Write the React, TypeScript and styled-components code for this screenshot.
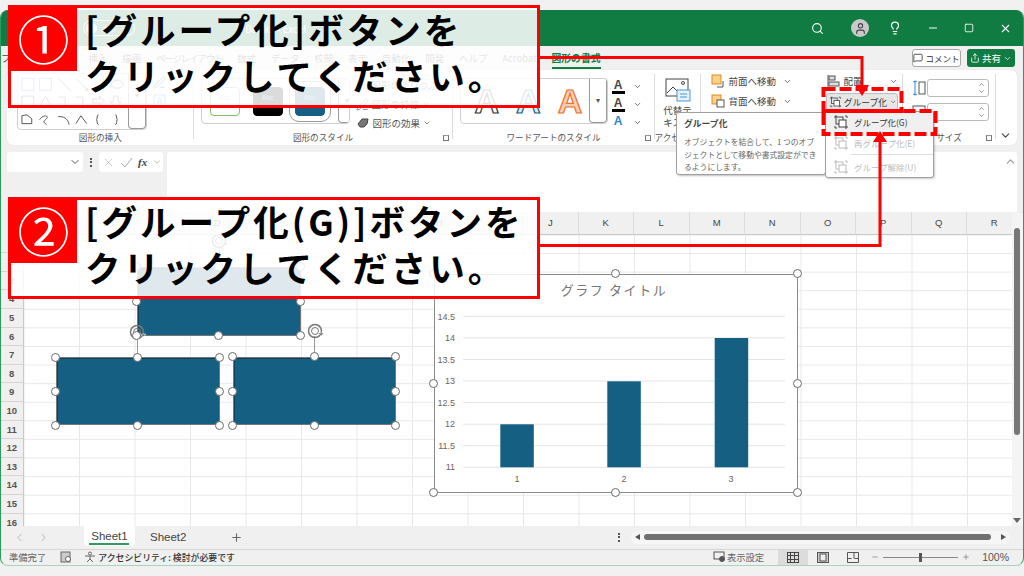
import styled, { createGlobalStyle } from "styled-components";
import {
  ChevronDown,
  ChevronLeft,
  ChevronRight,
  ChevronUp,
  Lightbulb,
  MessageSquare,
  Minus,
  PenLine,
  PaintBucket,
  Plus,
  Search,
  Share,
  Square,
  User,
  X,
} from "lucide-react";

const GREEN = "#107c41";
const RED = "#ff0000";
const BLUE = "#156082";
const JP = `"Noto Sans CJK JP", "Noto Sans", sans-serif`;

const GlobalStyle = createGlobalStyle`
  html, body { margin: 0; padding: 0; background: #f1f1f1; }
  * { box-sizing: border-box; }
  body { font-family: ${JP}; overflow: hidden; }
`;

const Page = styled.div`
  position: relative;
  width: 1024px;
  height: 576px;
  padding: 10px 0;
  overflow: hidden;
`;

const Window = styled.div`
  height: 556px;
  display: flex;
  flex-direction: column;
  background: #f0f0f0;
  border-radius: 8px;
  border-left: 1.5px solid #2f9a5e;
  border-right: 1.5px solid #2f9a5e;
  border-bottom: 1.5px solid #a9d3bc;
  overflow: hidden;
`;

/* title bar */
const TitleBar = styled.div`
  height: 36px;
  flex: none;
  background: ${GREEN};
  color: #fff;
  display: flex;
  align-items: center;
  padding-left: 82px;
  font-size: 10px;
`;

const AutoSave = styled.div`
  width: 52px;
  height: 16px;
  border: 1px solid #fff;
  border-radius: 8px;
  display: flex;
  align-items: center;
  gap: 4px;
  padding-left: 2px;
  font-size: 8px;
  &::before {
    content: "";
    width: 11px;
    height: 11px;
    border-radius: 50%;
    background: #fff;
  }
`;

const DocName = styled.div`
  margin-left: 110px;
`;

const TitleIcons = styled.div`
  margin-left: auto;
  display: flex;
  align-items: center;
`;

const TitleIcon = styled.div<{ $w: number }>`
  width: ${(p) => p.$w}px;
  display: flex;
  justify-content: center;
`;

const Avatar = styled.div`
  width: 18px;
  height: 18px;
  border-radius: 50%;
  background: #c9c9c9;
  color: #444;
  display: flex;
  align-items: center;
  justify-content: center;
`;

/* tab row */
const TabRow = styled.div`
  height: 24px;
  flex: none;
  display: flex;
  align-items: center;
  padding: 0 8px 0 0;
  gap: 14.8px;
  font-size: 9.5px;
  color: #444;
`;

const Tab = styled.div<{ $active?: boolean; $tight?: boolean }>`
  position: relative;
  line-height: 24px;
  white-space: nowrap;
  ${(p) => p.$tight && `letter-spacing: -1.2px;`}
  ${(p) =>
    p.$active &&
    `color: ${GREEN}; font-weight: 700; font-size: 9.8px;
     &::after { content: ""; position: absolute; left: 0; right: 0; bottom: 1px; height: 2px; background: ${GREEN}; }`}
`;

const TabActions = styled.div`
  margin-left: auto;
  display: flex;
  gap: 6px;
`;

const CommentButton = styled.div`
  width: 49px;
  height: 18px;
  border: 1px solid #a8a8a8;
  border-radius: 3px;
  background: #fff;
  display: flex;
  align-items: center;
  justify-content: center;
  gap: 2px;
  font-size: 8.5px;
  color: #333;
  white-space: nowrap;
`;

const ShareButton = styled(CommentButton)`
  width: 48px;
  border: none;
  background: ${GREEN};
  color: #fff;
  font-size: 9.5px;
`;

/* ribbon */
const Ribbon = styled.div`
  height: 75px;
  flex: none;
  margin: 0 6px;
  background: #fff;
  border-radius: 6px;
  display: flex;
  box-shadow: 0 0 1px rgba(0, 0, 0, 0.15);
`;

const Group = styled.div<{ $w: number }>`
  position: relative;
  width: ${(p) => p.$w}px;
  flex: none;
  display: flex;
  flex-direction: column;
  &:not(:last-child)::after {
    content: "";
    position: absolute;
    right: 0;
    top: 4px;
    bottom: 6px;
    width: 1px;
    background: #dcdcdc;
  }
`;

const GroupBody = styled.div<{ $pl: number; $pt: number }>`
  flex: 1;
  display: flex;
  padding: ${(p) => p.$pt}px 0 0 ${(p) => p.$pl}px;
  min-height: 0;
`;

const GroupLabel = styled.div`
  height: 15px;
  flex: none;
  text-align: center;
  font-size: 8.6px;
  line-height: 15px;
  color: #555;
  white-space: nowrap;
`;

const Launcher = styled.div`
  position: absolute;
  right: 4px;
  bottom: 4px;
  width: 6px;
  height: 6px;
  border: 1px solid #777;
  border-top-color: #999;
`;

const GalleryBox = styled.div<{ $w: number; $h: number }>`
  width: ${(p) => p.$w}px;
  height: ${(p) => p.$h}px;
  flex: none;
  display: flex;
  border: 1px solid #cfcfcf;
  border-radius: 4px;
  overflow: hidden;
`;

const GalleryScroll = styled.div`
  width: 18px;
  margin-left: auto;
  flex: none;
  border-left: 1px solid #9a9a9a;
  border-right: 1px solid #9a9a9a;
  border-bottom: 1px solid #9a9a9a;
  border-radius: 0 0 4px 4px;
  display: flex;
  justify-content: center;
  color: #555;
  font-size: 8px;
  padding-top: 15px;
`;

const ShapeTools = styled.div`
  margin-left: 6px;
  padding-top: 3px;
  display: flex;
  flex-direction: column;
  gap: 5px;
  color: #4a86c5;
`;

const Swatches = styled.div`
  flex: 1;
  display: flex;
  align-items: center;
  padding: 0 0 0 8px;
`;

const Swatch = styled.div<{ $bg: string; $line: string; $selected?: boolean }>`
  width: 30px;
  height: 29px;
  margin-right: 13px;
  border-radius: 4px;
  background: ${(p) => p.$bg};
  border: 1px solid ${(p) => p.$line};
  color: #bbb;
  font: 7px "Liberation Sans", sans-serif;
  text-align: center;
  line-height: 20px;
  ${(p) => p.$selected && `outline: 1px solid #999; outline-offset: 5px; margin-left: -1px;`}
`;

const StyleList = styled.div`
  display: flex;
  flex-direction: column;
  gap: 5px;
  margin-left: 6px;
  font-size: 9.5px;
  color: #555;
  white-space: nowrap;
`;

const StyleRow = styled.div`
  height: 14px;
  display: flex;
  align-items: center;
  gap: 3px;
`;

const ArtLetters = styled.div`
  flex: 1;
  display: flex;
  align-items: center;
  gap: 17px;
  padding-left: 14px;
`;

const ArtLetter = styled.span<{ $color: string; $fill: string }>`
  font: 700 34px "Liberation Sans", sans-serif;
  color: ${(p) => p.$fill};
  -webkit-text-stroke: 1.2px ${(p) => p.$color};
`;

const FontColorList = styled.div`
  display: flex;
  flex-direction: column;
  gap: 2px;
  margin-left: 4px;
`;

const FontColorRow = styled.div`
  height: 17px;
  display: flex;
  align-items: center;
  gap: 8px;
  color: #444;
`;

const FontA = styled.div<{ $bar: string; $color?: string }>`
  width: 13px;
  font: 700 12px/12px "Liberation Sans", sans-serif;
  text-align: center;
  color: ${(p) => p.$color ?? "#444"};
  border-bottom: 3px solid ${(p) => p.$bar};
`;

const AltText = styled.div`
  width: 46px;
  display: flex;
  flex-direction: column;
  align-items: center;
  font-size: 9.5px;
  line-height: 12px;
  color: #444;
`;

const ArrangeColumn = styled.div<{ $ml?: number }>`
  margin-left: ${(p) => p.$ml ?? 0}px;
  display: flex;
  flex-direction: column;
  gap: 6px;
  font-size: 9.5px;
  color: #444;
  white-space: nowrap;
  padding-top: 1px;
`;

const ArrangeRow = styled.div<{ $w?: number }>`
  height: 14px;
  width: ${(p) => p.$w ?? 81}px;
  display: flex;
  align-items: center;
  gap: 4px;
`;

const RowChevron = styled(ChevronDown)`
  margin-left: auto;
`;

const GroupButton = styled.div`
  width: 72px;
  height: 18px;
  margin-top: -1px;
  background: #e6e6e6;
  border: 1px solid #bcbcbc;
  border-radius: 3px;
  display: flex;
  align-items: center;
  gap: 3px;
  padding-left: 3px;
  font-size: 8.8px;
  color: #333;
  white-space: nowrap;
`;

const SizeColumn = styled.div`
  display: flex;
  flex-direction: column;
  gap: 6px;
`;

const SizeRow = styled.div`
  display: flex;
  align-items: center;
  gap: 1px;
`;

const SizeInput = styled.div`
  width: 62px;
  height: 18px;
  border: 1px solid #bbb;
  border-radius: 3px;
  display: flex;
  flex-direction: column;
  align-items: flex-end;
  justify-content: center;
  padding-right: 3px;
  color: #444;
`;

const CollapseSlot = styled.div`
  flex: 1;
  display: flex;
  align-items: flex-end;
  justify-content: center;
  padding-bottom: 3px;
  color: #444;
`;

/* formula bar */
const FormulaBar = styled.div`
  height: 67px;
  flex: none;
  display: flex;
  padding: 7px 6px 0;
`;

const NameBox = styled.div`
  width: 76px;
  height: 20px;
  background: #fff;
  border-radius: 3px;
  display: flex;
  align-items: center;
  justify-content: flex-end;
  padding-right: 2px;
  color: #555;
`;

const Dots = styled.div`
  width: 12px;
  height: 20px;
  margin: 0 2px;
  display: flex;
  flex-direction: column;
  align-items: center;
  justify-content: center;
  gap: 1.5px;
  & > i {
    width: 2px;
    height: 2px;
    background: #555;
  }
`;

const FxBox = styled.div`
  width: 64px;
  height: 20px;
  background: #fff;
  border-radius: 3px;
  display: flex;
  align-items: center;
  padding-left: 3px;
  gap: 5px;
  color: #aaa;
`;

const FxLabel = styled.span`
  font: italic 700 11px "Liberation Serif", serif;
  color: #444;
`;

const FormulaInput = styled.div`
  flex: 1;
  margin-left: 3.5px;
  background: #fff;
  border-radius: 3px 3px 0 0;
  display: flex;
  justify-content: flex-end;
  padding: 3px 0 0 0;
  color: #999;
`;

/* grid */
const ColumnHeader = styled.div`
  height: 22.6px;
  flex: none;
  display: flex;
  padding-left: 22.5px;
  background: #f0f0f0;
  overflow: hidden;
  padding-right: 12px;
`;

const ColumnCell = styled.div`
  width: 55.5px;
  flex: none;
  text-align: center;
  font: 9.5px/22px "Liberation Sans", sans-serif;
  color: #444;
  border-right: 1px solid #dcdcdc;
  border-bottom: 1px solid #c8c8c8;
`;

const GridRow = styled.div`
  flex: 1;
  min-height: 0;
  display: flex;
`;

const RowHeader = styled.div`
  width: 22.5px;
  flex: none;
  background: #f0f0f0;
  overflow: hidden;
`;

const RowCell = styled.div`
  height: 18.6px;
  text-align: center;
  font: 700 9.5px/18px "Liberation Sans", sans-serif;
  color: #555;
  border-bottom: 1px solid #d4d4d4;
  border-right: 1px solid #c8c8c8;
`;

const Canvas = styled.div`
  position: relative;
  flex: 1;
  background-color: #fff;
  background-image: linear-gradient(to right, #e8e8e8 1px, transparent 1px),
    linear-gradient(to bottom, #e8e8e8 1px, transparent 1px);
  background-size: 55.5px 18.6px;
  background-position: 55px 18px;
  overflow: hidden;
`;

/* the canvas starts at x=24, y=234.6 of the page */
const Placed = styled.div.attrs<{ $x: number; $y: number; $w: number; $h: number }>((p) => ({
  style: {
    left: p.$x - 24,
    top: p.$y - 234.6,
    width: p.$w,
    height: p.$h,
  },
}))<{ $x: number; $y: number; $w: number; $h: number }>`
  position: absolute;
`;

const BlueShape = styled(Placed)`
  background: ${BLUE};
  border: 1.5px solid #777;
  box-shadow: inset 1px 1px 0 #123f55;
`;

const ChartFrame = styled(Placed)`
  background: #fff;
  border: 1.5px solid #8a8a8a;
`;

const ChartSvg = styled.svg`
  display: block;
  margin: -1.5px 0 0 -1.5px;
`;

const Handle = styled.div.attrs<{ $x: number; $y: number }>((p) => ({
  style: { left: p.$x - 24 - 4.5, top: p.$y - 234.6 - 4.5 },
}))<{ $x: number; $y: number }>`
  position: absolute;
  width: 9px;
  height: 9px;
  border-radius: 50%;
  background: #fff;
  border: 1.5px solid #6a6a6a;
`;

const RotateStem = styled(Placed)`
  background: #999;
`;

const RotateIcon = styled.svg.attrs<{ $x: number; $y: number }>((p) => ({
  style: { left: p.$x - 24 - 8, top: p.$y - 234.6 - 8 },
}))<{ $x: number; $y: number }>`
  position: absolute;
  width: 20px;
  height: 16px;
`;

const VScroll = styled.div`
  width: 11.5px;
  flex: none;
  background: #f4f4f4;
  display: flex;
  flex-direction: column;
  align-items: center;
  margin-top: -22px;
  padding-top: 15px;
  color: #666;
`;

const VThumb = styled.div`
  width: 6px;
  height: 207px;
  background: #777;
  border-radius: 3px;
`;

const VArrow = styled.div`
  margin-top: auto;
  margin-bottom: 3px;
  width: 0;
  height: 0;
  border-left: 4px solid transparent;
  border-right: 4px solid transparent;
  border-top: 5px solid #666;
`;

/* sheet tabs */
const SheetBar = styled.div`
  height: 24px;
  flex: none;
  display: flex;
  align-items: center;
  border-bottom: 1px solid #d6d6d6;
  padding-left: 12px;
  font: 11.5px "Liberation Sans", sans-serif;
  color: #444;
`;

const SheetNav = styled.div`
  width: 71px;
  display: flex;
  gap: 11px;
  color: #aaa;
`;

const SheetTab = styled.div<{ $active?: boolean }>`
  height: 21px;
  padding: 0 6px;
  margin-right: 4px;
  position: relative;
  line-height: 20px;
  align-self: flex-start;
  ${(p) =>
    p.$active
      ? `width: 51px; background: #fff; border-radius: 0 0 4px 4px; height: 20px; text-align: center;
     &::after { content: ""; position: absolute; left: 5px; right: 6px; bottom: 1px; height: 1.5px; background: #2f9a5e; }`
      : `width: 58px; margin-left: 3px; line-height: 23px; text-align: left; padding-left: 8px;`}
`;

const AddSheet = styled.div`
  margin-left: 26px;
  color: #666;
  display: flex;
`;

const HScrollArea = styled.div`
  margin-left: auto;
  display: flex;
  align-items: center;
  margin-right: 13px;
`;

const HTrack = styled.div`
  width: 379px;
  height: 13px;
  margin-left: 4px;
  border-radius: 6px;
  background: #f6f6f6;
  display: flex;
  align-items: center;
  gap: 4px;
  padding: 0 4px;
`;

const HThumb = styled.div`
  flex: 1;
  height: 6px;
  margin-right: 6px;
  border-radius: 3px;
  background: #707070;
`;

const Tri = styled.div<{ $left?: boolean }>`
  width: 0;
  height: 0;
  border-top: 3.5px solid transparent;
  border-bottom: 3.5px solid transparent;
  ${(p) => (p.$left ? "border-right: 5px solid #555;" : "border-left: 5px solid #555;")}
`;

/* status bar */
const StatusBar = styled.div`
  flex: none;
  height: 15.5px;
  display: flex;
  align-items: center;
  padding: 0 14px 0 8px;
  font-size: 9.3px;
  color: #666;
  white-space: nowrap;
`;

const StatusGap = styled.span<{ $l: number; $r: number }>`
  display: flex;
  margin: 0 ${(p) => p.$r}px 0 ${(p) => p.$l}px;
`;

const StatusStrong = styled.span`
  color: #333;
  font-weight: 500;
  margin-left: 2px;
  font-size: 8.9px;
`;

const StatusRight = styled.div`
  margin-left: auto;
  display: flex;
  align-items: center;
  height: 100%;
`;

const ViewButton = styled.div<{ $active?: boolean }>`
  width: 30px;
  height: 100%;
  display: flex;
  align-items: center;
  justify-content: center;
  background: ${(p) => (p.$active ? "#dcdcdc" : "transparent")};
`;

const Zoom = styled.div`
  display: flex;
  align-items: center;
  margin-left: 3px;
  color: #777;
  gap: 4px;
`;

const ZoomTrack = styled.div`
  position: relative;
  width: 75px;
  height: 1px;
  background: #888;
  &::after {
    content: "";
    position: absolute;
    left: 36px;
    top: -4px;
    width: 3px;
    height: 9px;
    background: #555;
  }
`;

const ZoomValue = styled.span`
  margin-left: 8px;
  font: 10.5px "Liberation Sans", sans-serif;
  color: #555;
`;

/* overlays */
const Tooltip = styled.div`
  position: absolute;
  left: 676px;
  top: 112px;
  width: 150px;
  height: 63px;
  background: #fff;
  border: 1px solid #a0a0a0;
  border-radius: 3px;
  padding: 4px 7px;
  color: #666;
  font-size: 7.8px;
  line-height: 12.5px;
  white-space: nowrap;
  box-shadow: 1px 1px 2px rgba(0, 0, 0, 0.25);
`;

const TooltipTitle = styled.div`
  font-weight: 700;
  color: #444;
  font-size: 8.8px;
  margin-bottom: 5px;
  line-height: 14px;
`;

const Menu = styled.div`
  position: absolute;
  left: 825px;
  top: 111px;
  width: 109px;
  height: 67px;
  background: #fff;
  border: 1px solid #a0a0a0;
  border-radius: 3px;
  font-size: 8.5px;
  color: #bbb;
  box-shadow: 1px 1px 2px rgba(0, 0, 0, 0.2);
`;

const MenuItem = styled.div<{ $active?: boolean }>`
  height: ${(p) => (p.$active ? 20 : 21)}px;
  display: flex;
  align-items: center;
  gap: 6px;
  padding-left: 8px;
  white-space: nowrap;
  ${(p) => p.$active && `background: #f0f0f0; color: #333;`}
`;

const MenuDivider = styled.div`
  height: 1px;
  margin: 1px 0 1px 25px;
  background: #ddd;
`;

const Callout = styled.div<{ $top: number; $h: number; $alpha: number }>`
  position: absolute;
  left: 8px;
  top: ${(p) => p.$top}px;
  width: 532px;
  height: ${(p) => p.$h}px;
  border: 3px solid ${RED};
  background: rgba(255, 255, 255, ${(p) => p.$alpha});
  display: flex;
  align-items: flex-start;
`;

const Badge = styled.div`
  width: 69px;
  height: 66px;
  margin: -3px 0 0 -3px;
  flex: none;
  background: ${RED};
  color: #fff;
  font: 400 52px/66px ${JP};
  text-align: center;
  padding-left: 2px;
`;

const CalloutText = styled.div`
  padding-left: 8px;
  font-size: 35.5px;
  font-weight: 700;
  line-height: 46px;
  letter-spacing: 3px;
  color: #000;
  white-space: nowrap;
  margin-top: -2px;
`;

const Annotations = styled.svg`
  position: absolute;
  left: 0;
  top: 0;
  width: 1024px;
  height: 576px;
  pointer-events: none;
`;

const GroupIcon = ({ color = "#444" }: { color?: string }) => (
  <svg width="14" height="14" viewBox="0 0 14 14" fill="none" stroke={color} strokeWidth="1">
    <rect x="2" y="2" width="7" height="7" />
    <rect x="5" y="5" width="7" height="7" fill="#fff" />
    <path d="M1 1h2M1 1v2M13 1h-2M13 1v2M1 13h2M1 13v-2M13 13h-2M13 13v-2" />
  </svg>
);

const ShapeGalleryIcons = () => (
  <svg width="112" height="57" viewBox="0 0 112 57" fill="none" stroke="#555" strokeWidth="1">
    <rect x="4" y="4" width="12" height="12" stroke="#4a86c5" />
    <rect x="22" y="4" width="12" height="12" stroke="#4a86c5" />
    <path d="M41 4l13 13M59 4l12 12M68 16h3v-3" />
    <ellipse cx="101" cy="10" rx="6" ry="4" />
    <rect x="4" y="22" width="12" height="11" />
    <path d="M22 33l6-11 6 11zM41 23h7v10h6M59 23h7v10h5" />
    <path d="M76 25h7v-3l5 5-5 5v-3h-7zM97 22h5v6h3l-5.500 6-5.500-6h3z" />
    <path d="M4 50v-8l5-1 5 4v5zM22 46c4-6 10-4 7-1s-4 3 0 6M41 43c5-1 10 2 11 8M59 50l5-8 6 8" />
    <path d="M82 41c-2 0-1 4-2 5 1 1 0 5 2 5M99 41c2 0 1 4 2 5-1 1 0 5-2 5" />
  </svg>
);

const COLUMNS = "ABCDEFGHIJKLMNOPQR".split("");
const ROWS = Array.from({ length: 16 }, (_, i) => i + 1);
const Y_TICKS = [14.5, 14, 13.5, 13, 12.5, 12, 11.5, 11];

const boxHandles = (x: number, y: number, w: number, h: number) => [
  [x, y],
  [x + w / 2, y],
  [x + w, y],
  [x, y + h / 2],
  [x + w, y + h / 2],
  [x, y + h],
  [x + w / 2, y + h],
  [x + w, y + h],
];

const Rotate = ({ x, y }: { x: number; y: number }) => (
  <RotateIcon $x={x} $y={y} viewBox="0 0 20 16" fill="none" stroke="#777">
    <circle cx="8" cy="8" r="6.500" strokeWidth="1.500" />
    <circle cx="8" cy="8" r="3.500" strokeWidth="1" />
    <path d="M11 10h6l-3 3z" fill="#777" stroke="#fff" strokeWidth="0.5" />
  </RotateIcon>
);

const Chart = () => (
  <ChartSvg width="364" height="219" viewBox="0 0 364 219">
    <text x="181" y="22" textAnchor="middle" fontSize="13" fill="#777" letterSpacing="1.600" fontFamily={JP}>
      グラフ タイトル
    </text>
    {Y_TICKS.map((t, i) => {
      const y = 43.3 + i * 21.57;
      return (
        <g key={t}>
          <line x1="30" x2="352" y1={y} y2={y} stroke="#e4e4e4" strokeWidth="1" />
          <text x="22" y={y + 3.2} textAnchor="end" fontSize="9" fill="#666" fontFamily="Liberation Sans, sans-serif">
            {t}
          </text>
        </g>
      );
    })}
    <rect x="67.300" y="151.300" width="33.500" height="43" fill={BLUE} />
    <rect x="174.300" y="108.300" width="33.500" height="86" fill={BLUE} />
    <rect x="281.700" y="65" width="33.500" height="129.300" fill={BLUE} />
    {[84, 191, 298].map((x, i) => (
      <text key={x} x={x} y="209" textAnchor="middle" fontSize="9" fill="#666" fontFamily="Liberation Sans, sans-serif">
        {i + 1}
      </text>
    ))}
  </ChartSvg>
);

export default function App() {
  return (
    <Page>
      <GlobalStyle />
      <Window>
        <TitleBar>
          <AutoSave>オフ</AutoSave>
          <DocName>Book1 - Excel</DocName>
          <TitleIcons>
            <TitleIcon $w={55}>
              <Search size={13} />
            </TitleIcon>
            <TitleIcon $w={30}>
              <Avatar>
                <User size={13} />
              </Avatar>
            </TitleIcon>
            <TitleIcon $w={40}>
              <Lightbulb size={14} />
            </TitleIcon>
            <TitleIcon $w={35}>
              <Minus size={12} />
            </TitleIcon>
            <TitleIcon $w={38}>
              <Square size={10} />
            </TitleIcon>
            <TitleIcon $w={35}>
              <X size={13} />
            </TitleIcon>
          </TitleIcons>
        </TitleBar>

        <TabRow>
          <Tab $tight>ファイル</Tab>
          <Tab $tight>ホーム</Tab>
          <Tab>挿入</Tab>
          <Tab>描画</Tab>
          <Tab $tight>ページレイアウト</Tab>
          <Tab>数式</Tab>
          <Tab>データ</Tab>
          <Tab>校閲</Tab>
          <Tab>表示</Tab>
          <Tab>自動化</Tab>
          <Tab>開発</Tab>
          <Tab>ヘルプ</Tab>
          <Tab>Acrobat</Tab>
          <Tab $active>図形の書式</Tab>
          <TabActions>
            <CommentButton>
              <MessageSquare size={10} />
              コメント
            </CommentButton>
            <ShareButton>
              <Share size={10} />
              共有
              <ChevronDown size={9} />
            </ShareButton>
          </TabActions>
        </TabRow>

        <Ribbon>
          <Group $w={186.5}>
            <GroupBody $pl={10} $pt={3}>
              <GalleryBox $w={130} $h={57}>
                <ShapeGalleryIcons />
                <GalleryScroll>▾</GalleryScroll>
              </GalleryBox>
              <ShapeTools>
                <PenLine size={13} />
                <svg width="13" height="13" viewBox="0 0 13 13" fill="none" stroke="currentColor">
                  <rect x="1" y="1" width="11" height="11" />
                  <path d="M4 10l2.500-7 2.500 7M5 8h3" />
                </svg>
              </ShapeTools>
            </GroupBody>
            <GroupLabel>図形の挿入</GroupLabel>
          </Group>
          <Group $w={259}>
            <GroupBody $pl={7} $pt={8}>
              <GalleryBox $w={149} $h={46}>
                <Swatches>
                  <Swatch $bg="#fff" $line="#7cc06a">
                    Abc
                  </Swatch>
                  <Swatch $bg="#000" $line="#000">
                    Abc
                  </Swatch>
                  <Swatch $bg={BLUE} $line={BLUE} $selected>
                    Abc
                  </Swatch>
                </Swatches>
                <GalleryScroll>▾</GalleryScroll>
              </GalleryBox>
              <StyleList>
                <StyleRow>
                  <PaintBucket size={13} strokeWidth={1.2} />
                  図形の塗りつぶし
                </StyleRow>
                <StyleRow>
                  <PenLine size={13} strokeWidth={1.2} />
                  図形の枠線
                  <ChevronDown size={8} />
                </StyleRow>
                <StyleRow>
                  <svg width="14" height="12" viewBox="0 0 14 12" fill="none" stroke="#444">
                    <path d="M2 7l4-5h6l-1 5-3 3H4z" fill="#777" />
                  </svg>
                  図形の効果
                  <ChevronDown size={8} />
                </StyleRow>
              </StyleList>
            </GroupBody>
            <GroupLabel>図形のスタイル</GroupLabel>
            <Launcher />
          </Group>
          <Group $w={202}>
            <GroupBody $pl={7} $pt={8}>
              <GalleryBox $w={148} $h={46}>
                <ArtLetters>
                  <ArtLetter $color="#333" $fill="#fff">
                    A
                  </ArtLetter>
                  <ArtLetter $color={BLUE} $fill="#dfe9ee">
                    A
                  </ArtLetter>
                  <ArtLetter $color="#e97132" $fill="#f8cdb1">
                    A
                  </ArtLetter>
                </ArtLetters>
                <GalleryScroll>▾</GalleryScroll>
              </GalleryBox>
              <FontColorList>
                <FontColorRow>
                  <FontA $bar="#000">A</FontA>
                  <ChevronDown size={9} />
                </FontColorRow>
                <FontColorRow>
                  <FontA $bar="#000">A</FontA>
                  <ChevronDown size={9} />
                </FontColorRow>
                <FontColorRow>
                  <FontA $bar="transparent" $color="#2e86d0">
                    A
                  </FontA>
                  <ChevronDown size={9} />
                </FontColorRow>
              </FontColorList>
            </GroupBody>
            <GroupLabel>ワードアートのスタイル</GroupLabel>
            <Launcher />
          </Group>
          <Group $w={46}>
            <GroupBody $pl={0} $pt={8}>
              <AltText>
                <svg width="26" height="26" viewBox="0 0 26 26" fill="none" stroke="#444">
                  <rect x="1" y="1" width="22" height="17" />
                  <path d="M2 15l6-6 5 5 3-2 6 5" />
                  <circle cx="18" cy="5" r="1.500" />
                  <rect x="12" y="12" width="13" height="11" fill="#e6f2fb" stroke="#4a9ad4" />
                  <path d="M15 16h7M15 19h7" stroke="#4a9ad4" />
                </svg>
                代替テ
                <br />
                キスト
              </AltText>
            </GroupBody>
            <GroupLabel>アクセシビリティ</GroupLabel>
          </Group>
          <Group $w={202}>
            <GroupBody $pl={10} $pt={3}>
              <ArrangeColumn>
                <ArrangeRow>
                  <svg width="14" height="14" viewBox="0 0 14 14" fill="none" stroke="#e08a1e">
                    <rect x="1" y="1" width="9" height="9" fill="#fbd28a" />
                    <path d="M12 7v6H6" stroke="#555" />
                  </svg>
                  前面へ移動
                  <RowChevron size={9} />
                </ArrangeRow>
                <ArrangeRow>
                  <svg width="14" height="14" viewBox="0 0 14 14" fill="none" stroke="#e08a1e">
                    <rect x="1" y="1" width="9" height="9" fill="#fbd28a" />
                    <rect x="6" y="6" width="7" height="7" fill="#fff" stroke="#555" />
                  </svg>
                  背面へ移動
                  <RowChevron size={9} />
                </ArrangeRow>
              </ArrangeColumn>
              <ArrangeColumn $ml={34}>
                <ArrangeRow $w={72}>
                  <svg width="14" height="14" viewBox="0 0 14 14" fill="none" stroke="#555">
                    <path d="M2 1v12" />
                    <rect x="3" y="2" width="6" height="4" fill="#ddd" />
                    <rect x="3" y="8" width="10" height="4" fill="#ddd" />
                  </svg>
                  配置
                  <RowChevron size={9} />
                </ArrangeRow>
                <GroupButton>
                  <GroupIcon />
                  グループ化
                  <ChevronDown size={8} />
                </GroupButton>
              </ArrangeColumn>
            </GroupBody>
            <GroupLabel />
          </Group>
          <Group $w={93}>
            <GroupBody $pl={9} $pt={9}>
              <SizeColumn>
                <SizeRow>
                  <svg width="14" height="16" viewBox="0 0 14 16" fill="none" stroke="#2e86d0">
                    <path d="M3 1v14M1 2l2-1 2 1M1 14l2 1 2-1" />
                    <rect x="7" y="2" width="6" height="12" stroke="#555" />
                  </svg>
                  <SizeInput>
                    <ChevronUp size={7} />
                    <ChevronDown size={7} />
                  </SizeInput>
                </SizeRow>
                <SizeRow>
                  <svg width="14" height="16" viewBox="0 0 14 16" fill="none" stroke="#555">
                    <rect x="1" y="2" width="12" height="6" />
                  </svg>
                  <SizeInput>
                    <ChevronUp size={7} />
                    <ChevronDown size={7} />
                  </SizeInput>
                </SizeRow>
              </SizeColumn>
            </GroupBody>
            <GroupLabel>サイズ</GroupLabel>
            <Launcher />
          </Group>
          <Group $w={20}>
            <CollapseSlot>
              <ChevronDown size={13} />
            </CollapseSlot>
          </Group>
        </Ribbon>

        <FormulaBar>
          <NameBox>
            <ChevronDown size={12} />
          </NameBox>
          <Dots>
            <i />
            <i />
            <i />
          </Dots>
          <FxBox>
            <X size={13} strokeWidth={1} />
            <svg width="13" height="13" viewBox="0 0 13 13" fill="none" stroke="#aaa">
              <path d="M1 7l4 4 7-9" />
            </svg>
            <FxLabel>fx</FxLabel>
            <ChevronDown size={10} />
          </FxBox>
          <FormulaInput>
            <ChevronUp size={13} />
          </FormulaInput>
        </FormulaBar>

        <ColumnHeader>
          {COLUMNS.map((c) => (
            <ColumnCell key={c}>{c}</ColumnCell>
          ))}
        </ColumnHeader>

        <GridRow>
          <RowHeader>
            {ROWS.map((r) => (
              <RowCell key={r}>{r}</RowCell>
            ))}
          </RowHeader>
          <Canvas>
            <BlueShape $x={137} $y={267} $w={164} $h={69} />
            <BlueShape $x={56} $y={357.5} $w={164} $h={68} />
            <BlueShape $x={233} $y={357} $w={163} $h={68.5} />
            <RotateStem $x={137} $y={336} $w={1} $h={22} />
            <RotateStem $x={314} $y={336} $w={1} $h={22} />
            <RotateStem $x={219} $y={249} $w={1} $h={18} />
            <Rotate x={137} y={332} />
            <Rotate x={315} y={331} />
            <Rotate x={219} y={241} />
            {[
              ...boxHandles(137, 267, 164, 69),
              ...boxHandles(56, 357.5, 164, 68),
              ...boxHandles(233, 357, 163, 68.5),
            ].map(([x, y], i) => (
              <Handle key={i} $x={x} $y={y} />
            ))}
            <ChartFrame $x={434} $y={274} $w={364} $h={219}>
              <Chart />
            </ChartFrame>
            {boxHandles(434, 274, 364, 219).map(([x, y], i) => (
              <Handle key={i} $x={x} $y={y} />
            ))}
          </Canvas>
          <VScroll>
            <VThumb />
            <VArrow />
          </VScroll>
        </GridRow>

        <SheetBar>
          <SheetNav>
            <ChevronLeft size={13} strokeWidth={1.5} />
            <ChevronRight size={13} strokeWidth={1.5} />
          </SheetNav>
          <SheetTab $active>Sheet1</SheetTab>
          <SheetTab>Sheet2</SheetTab>
          <AddSheet>
            <Plus size={13} />
          </AddSheet>
          <HScrollArea>
            <Dots>
              <i />
              <i />
              <i />
            </Dots>
            <HTrack>
              <Tri $left />
              <HThumb />
              <Tri />
            </HTrack>
          </HScrollArea>
        </SheetBar>

        <StatusBar>
          準備完了
          <StatusGap $l={14} $r={12}>
            <svg width="12" height="12" viewBox="0 0 12 12" fill="none" stroke="#666">
              <rect x="1" y="1" width="9" height="10" fill="#ccc" />
              <circle cx="8" cy="8" r="2.500" fill="#fff" />
            </svg>
          </StatusGap>
          <svg width="12" height="12" viewBox="0 0 12 12" fill="none" stroke="#666">
            <circle cx="6" cy="2.500" r="1.500" />
            <path d="M1 5h10M6 5v3l-3 3M6 8l3 3" />
          </svg>
          <StatusStrong>アクセシビリティ: 検討が必要です</StatusStrong>
          <StatusRight>
            <svg width="13" height="12" viewBox="0 0 13 12" fill="none" stroke="#555">
              <rect x="1" y="1" width="10" height="7" />
              <circle cx="9" cy="8" r="2.500" fill="#555" />
            </svg>
            <StatusGap $l={1} $r={14}>
              表示設定
            </StatusGap>
            <ViewButton $active>
              <svg width="12" height="11" viewBox="0 0 12 11" fill="#444">
                <path d="M0 0h12v11H0zM1 1v2h2V1zm3 0v2h3V1zm4 0v2h3V1zM1 4v3h2V4zm3 0v3h3V4zm4 0v3h3V4zM1 8v2h2V8zm3 0v2h3V8zm4 0v2h3V8z" fillRule="evenodd" />
              </svg>
            </ViewButton>
            <ViewButton>
              <svg width="12" height="11" viewBox="0 0 12 11" fill="#ccc" stroke="#555">
                <rect x="0.500" y="0.500" width="11" height="10" />
                <rect x="3" y="2" width="6" height="7" fill="#eee" />
              </svg>
            </ViewButton>
            <ViewButton>
              <svg width="12" height="11" viewBox="0 0 12 11" fill="none" stroke="#555">
                <path d="M0.500 0.500h11v10h-11zM0.500 6.500h4M7.500 6.500h4M7 0.500v6" />
              </svg>
            </ViewButton>
            <Zoom>
              <Minus size={8} />
              <ZoomTrack />
              <Plus size={8} />
              <ZoomValue>100%</ZoomValue>
            </Zoom>
          </StatusRight>
        </StatusBar>
      </Window>

      <Tooltip>
        <TooltipTitle>グループ化</TooltipTitle>
        オブジェクトを結合して、1 つのオブ
        <br />
        ジェクトとして移動や書式設定ができ
        <br />
        るようにします。
      </Tooltip>

      <Menu>
        <MenuItem $active>
          <GroupIcon />
          グループ化(G)
        </MenuItem>
        <MenuItem>
          <GroupIcon color="#bbb" />
          再グループ化(E)
        </MenuItem>
        <MenuDivider />
        <MenuItem>
          <GroupIcon color="#bbb" />
          グループ解除(U)
        </MenuItem>
      </Menu>

      <Annotations viewBox="0 0 1024 576" fill="none">
        <path d="M540 57.500H862V88" stroke={RED} strokeWidth="3" />
        <path d="M855 85l7 11 7-11z" fill={RED} />
        <path d="M540 245.500H880V140" stroke={RED} strokeWidth="3" />
        <path d="M873 142l7-11 7 11z" fill={RED} />
        <rect x="823.500" y="89" width="78" height="22" stroke={RED} strokeWidth="4" strokeDasharray="12 4" />
        <rect x="823.500" y="111" width="112" height="23" stroke={RED} strokeWidth="4" strokeDasharray="12 4" />
      </Annotations>

      <Callout $top={5} $h={103} $alpha={0.86}>
        <Badge>①</Badge>
        <CalloutText>
          [グループ化]ボタンを
          <br />
          クリックしてください。
        </CalloutText>
      </Callout>

      <Callout $top={197} $h={102} $alpha={0.86}>
        <Badge>②</Badge>
        <CalloutText>
          [グループ化(G)]ボタンを
          <br />
          クリックしてください。
        </CalloutText>
      </Callout>
    </Page>
  );
}
